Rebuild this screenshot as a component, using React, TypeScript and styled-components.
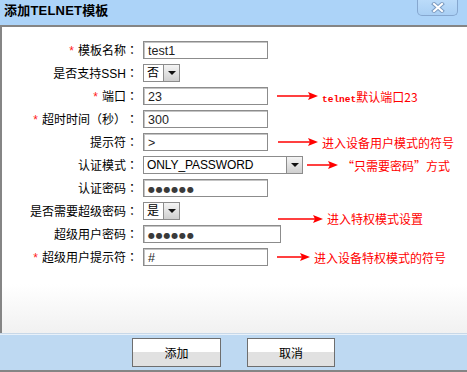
import * as React from 'react';
import styled, { createGlobalStyle } from 'styled-components';

const GlobalStyle = createGlobalStyle`
    html, body {
        margin: 0;
        padding: 0;
        background: #ffffff;
    }
    body {
        font-family: 'Liberation Sans', 'Noto Sans CJK SC', sans-serif;
        font-size: 12px;
        color: #000;
        text-spacing-trim: space-all;
    }
`;

const Window = styled.div`
    width: 467px;
    height: 372px;
    display: flex;
    flex-direction: column;
    overflow: hidden;
`;

const TitleBar = styled.div`
    height: 25px;
    flex: none;
    background: #acd3f8;
    border-bottom: 2px solid #858585;
    display: flex;
    align-items: flex-start;
    justify-content: space-between;
    padding-left: 4px;
`;

const Title = styled.div`
    font-weight: bold;
    font-size: 13px;
    line-height: 21px;
    letter-spacing: 0.2px;
`;

const CloseButton = styled.div`
    width: 41px;
    height: 17px;
    margin-right: 9px;
    margin-top: -1px;
    box-sizing: border-box;
    border: 1px solid #86a7cf;
    border-top: none;
    border-radius: 0 0 5px 5px;
    background: linear-gradient(#bcdcfa, #a9cff4);
    display: flex;
    align-items: center;
    justify-content: center;
`;

const Body = styled.div`
    flex: 1;
    border-left: 2px solid #858585;
    background: linear-gradient(to bottom, #ffffff 84%, #f1f1f1 100%);
    padding-top: 14px;
`;

const Row = styled.div`
    position: relative;
    display: flex;
    align-items: center;
    height: 18px;
    margin-bottom: 5px;
`;

const Label = styled.div`
    width: 136px;
    flex: none;
    text-align: right;
    white-space: nowrap;
    font-family: 'Liberation Sans', 'Noto Sans CJK SC', sans-serif;
    font-size: 12px;
    line-height: 18px;
    text-spacing-trim: space-all;
`;

const Colon = styled.span`
    font-family: 'Noto Sans CJK TC', sans-serif;
`;

const Star = styled.span`
    color: #ff2020;
    margin-right: 4px;
`;

const TextBox = styled.div<{ $w: number }>`
    width: ${p => p.$w}px;
    height: 18px;
    margin-left: 5px;
    flex: none;
    box-sizing: border-box;
    border: 1px solid #8c8c8c;
    box-shadow: inset 1px 1px 0 #c4c4c4;
    background: #fff;
    padding: 2px 0 0 4px;
    font-family: 'Liberation Sans', sans-serif;
    font-size: 12.5px;
    line-height: 15px;
    color: #1e1e1e;
    overflow: hidden;
    white-space: nowrap;
`;

const Dots = styled.span`
    font-family: 'DejaVu Sans', sans-serif;
    font-size: 8px;
    letter-spacing: 0.8px;
    color: #3a3a3a;
    position: relative;
    top: -1px;
`;

const SelectBox = styled.div<{ $w: number }>`
    width: ${p => p.$w}px;
    height: 18px;
    margin-left: 5px;
    flex: none;
    box-sizing: border-box;
    border: 1px solid #8c8c8c;
    background: #fff;
    display: flex;
    align-items: stretch;
`;

const SelectValue = styled.div`
    flex: 1;
    padding-left: 3px;
    font-family: 'Liberation Sans', 'Noto Sans CJK SC', sans-serif;
    font-size: 12px;
    line-height: 16px;
    letter-spacing: -0.1px;
    white-space: nowrap;
    overflow: hidden;
`;

const SelectButton = styled.div`
    width: 16px;
    flex: none;
    box-sizing: border-box;
    border-left: 1px solid #8c8c8c;
    background: linear-gradient(#f4f4f4, #cfcfcf);
    display: flex;
    align-items: center;
    justify-content: center;
`;

const Annotation = styled.div<{ $gap: number; $drop: number }>`
    display: flex;
    align-items: center;
    flex: none;
    margin-left: ${p => p.$gap}px;
    color: #ff0000;
    font-family: 'Noto Sans CJK SC', sans-serif;
    font-size: 12px;
    white-space: nowrap;
    text-spacing-trim: space-all;
    ${p =>
        p.$drop
            ? `position: absolute; left: ${136 + p.$gap}px; top: ${p.$drop - 9}px; margin-left: 0;`
            : ''}
`;

const ArrowSvg = styled.svg`
    flex: none;
    display: block;
`;

const NoteText = styled.span`
    margin-left: 4px;
`;

const MonoSpan = styled.span`
    font-family: 'Liberation Mono', monospace;
    font-size: 9.5px;
    font-weight: bold;
`;

const Footer = styled.div`
    height: 36px;
    flex: none;
    border-top: 1px solid #c8d8e8;
    box-shadow: inset 0 1px 0 #e8f1fa;
    background: #bed9f2;
    border-bottom: 2px solid #858585;
    display: flex;
    align-items: center;
    justify-content: center;
    gap: 26px;
`;

const Button = styled.div<{ $w: number }>`
    width: ${p => p.$w}px;
    height: 29px;
    margin-top: 1px;
    box-sizing: border-box;
    border: 1px solid #6e6e6e;
    background: linear-gradient(#ffffff 0%, #ffffff 50%, #e1e1e1 50%, #e1e1e1 100%);
    display: flex;
    align-items: center;
    justify-content: center;
    font-family: 'Noto Sans CJK SC', sans-serif;
    font-size: 12px;
`;

// Form rows shown in the dialog
type FieldKind = 'text' | 'password' | 'select';

type Note = {
    text: React.ReactNode;
    arrow: number;
    gap: number;
    drop?: number;
};

type FormRow = {
    label: string;
    required?: boolean;
    kind: FieldKind;
    value: string;
    width: number;
    note?: Note;
};

const rows: FormRow[] = [
    { label: '模板名称', required: true, kind: 'text', value: 'test1', width: 125 },
    { label: '是否支持SSH', kind: 'select', value: '否', width: 37 },
    {
        label: '端口',
        required: true,
        kind: 'text',
        value: '23',
        width: 125,
        note: {
            text: (
                <>
                    <MonoSpan>telnet</MonoSpan>默认端口23
                </>
            ),
            arrow: 41,
            gap: 9,
        },
    },
    { label: '超时时间（秒）', required: true, kind: 'text', value: '300', width: 125 },
    {
        label: '提示符',
        kind: 'text',
        value: '>',
        width: 125,
        note: { text: '进入设备用户模式的符号', arrow: 40, gap: 10 },
    },
    {
        label: '认证模式',
        kind: 'select',
        value: 'ONLY_PASSWORD',
        width: 160,
        note: { text: '“只需要密码”方式', arrow: 31, gap: 4 },
    },
    { label: '认证密码', kind: 'password', value: '●●●●●●', width: 125 },
    {
        label: '是否需要超级密码',
        kind: 'select',
        value: '是',
        width: 37,
        note: { text: '进入特权模式设置', arrow: 45, gap: 140, drop: 17 },
    },
    { label: '超级用户密码', kind: 'password', value: '●●●●●●', width: 138 },
    {
        label: '超级用户提示符',
        required: true,
        kind: 'text',
        value: '#',
        width: 125,
        note: { text: '进入设备特权模式的符号', arrow: 33, gap: 9 },
    },
];

const CloseIcon = () => (
    <svg width="14" height="11" viewBox="0 0 14 11">
        <path d="M3 2 L11 9 M11 2 L3 9" stroke="#7d9cc2" strokeWidth="4" strokeLinecap="square" />
        <path d="M3 2 L11 9 M11 2 L3 9" stroke="#ffffff" strokeWidth="2" strokeLinecap="square" />
    </svg>
);

const DownTriangle = () => (
    <svg width="8" height="5" viewBox="0 0 8 5">
        <path d="M0 0 H8 L4 4 Z" fill="#111" />
    </svg>
);

const Arrow = ({ len }: { len: number }) => (
    <ArrowSvg width={len} height="10" viewBox={`0 0 ${len} 10`}>
        <line x1="0" y1="5" x2={len - 8} y2="5" stroke="#ff0000" strokeWidth="1.5" />
        <path d={`M${len - 10} 1 L${len} 5 L${len - 10} 9 L${len - 8} 5 Z`} fill="#ff0000" />
    </ArrowSvg>
);

const Field = ({ row }: { row: FormRow }) => {
    if (row.kind === 'select') {
        return (
            <SelectBox $w={row.width}>
                <SelectValue>{row.value}</SelectValue>
                <SelectButton>
                    <DownTriangle />
                </SelectButton>
            </SelectBox>
        );
    }
    return (
        <TextBox $w={row.width}>
            {row.kind === 'password' ? <Dots>{row.value}</Dots> : row.value}
        </TextBox>
    );
};

export default function App() {
    return (
        <>
            <GlobalStyle />
            <Window>
                <TitleBar>
                    <Title>添加TELNET模板</Title>
                    <CloseButton>
                        <CloseIcon />
                    </CloseButton>
                </TitleBar>
                <Body>
                    {rows.map(row => (
                        <Row key={row.label}>
                            <Label>
                                {row.required && <Star>*</Star>}
                                {row.label}
                                <Colon>：</Colon>
                            </Label>
                            <Field row={row} />
                            {row.note && (
                                <Annotation $gap={row.note.gap} $drop={row.note.drop ?? 0}>
                                    <Arrow len={row.note.arrow} />
                                    <NoteText>{row.note.text}</NoteText>
                                </Annotation>
                            )}
                        </Row>
                    ))}
                </Body>
                <Footer>
                    <Button $w={89}>添加</Button>
                    <Button $w={88}>取消</Button>
                </Footer>
            </Window>
        </>
    );
}
